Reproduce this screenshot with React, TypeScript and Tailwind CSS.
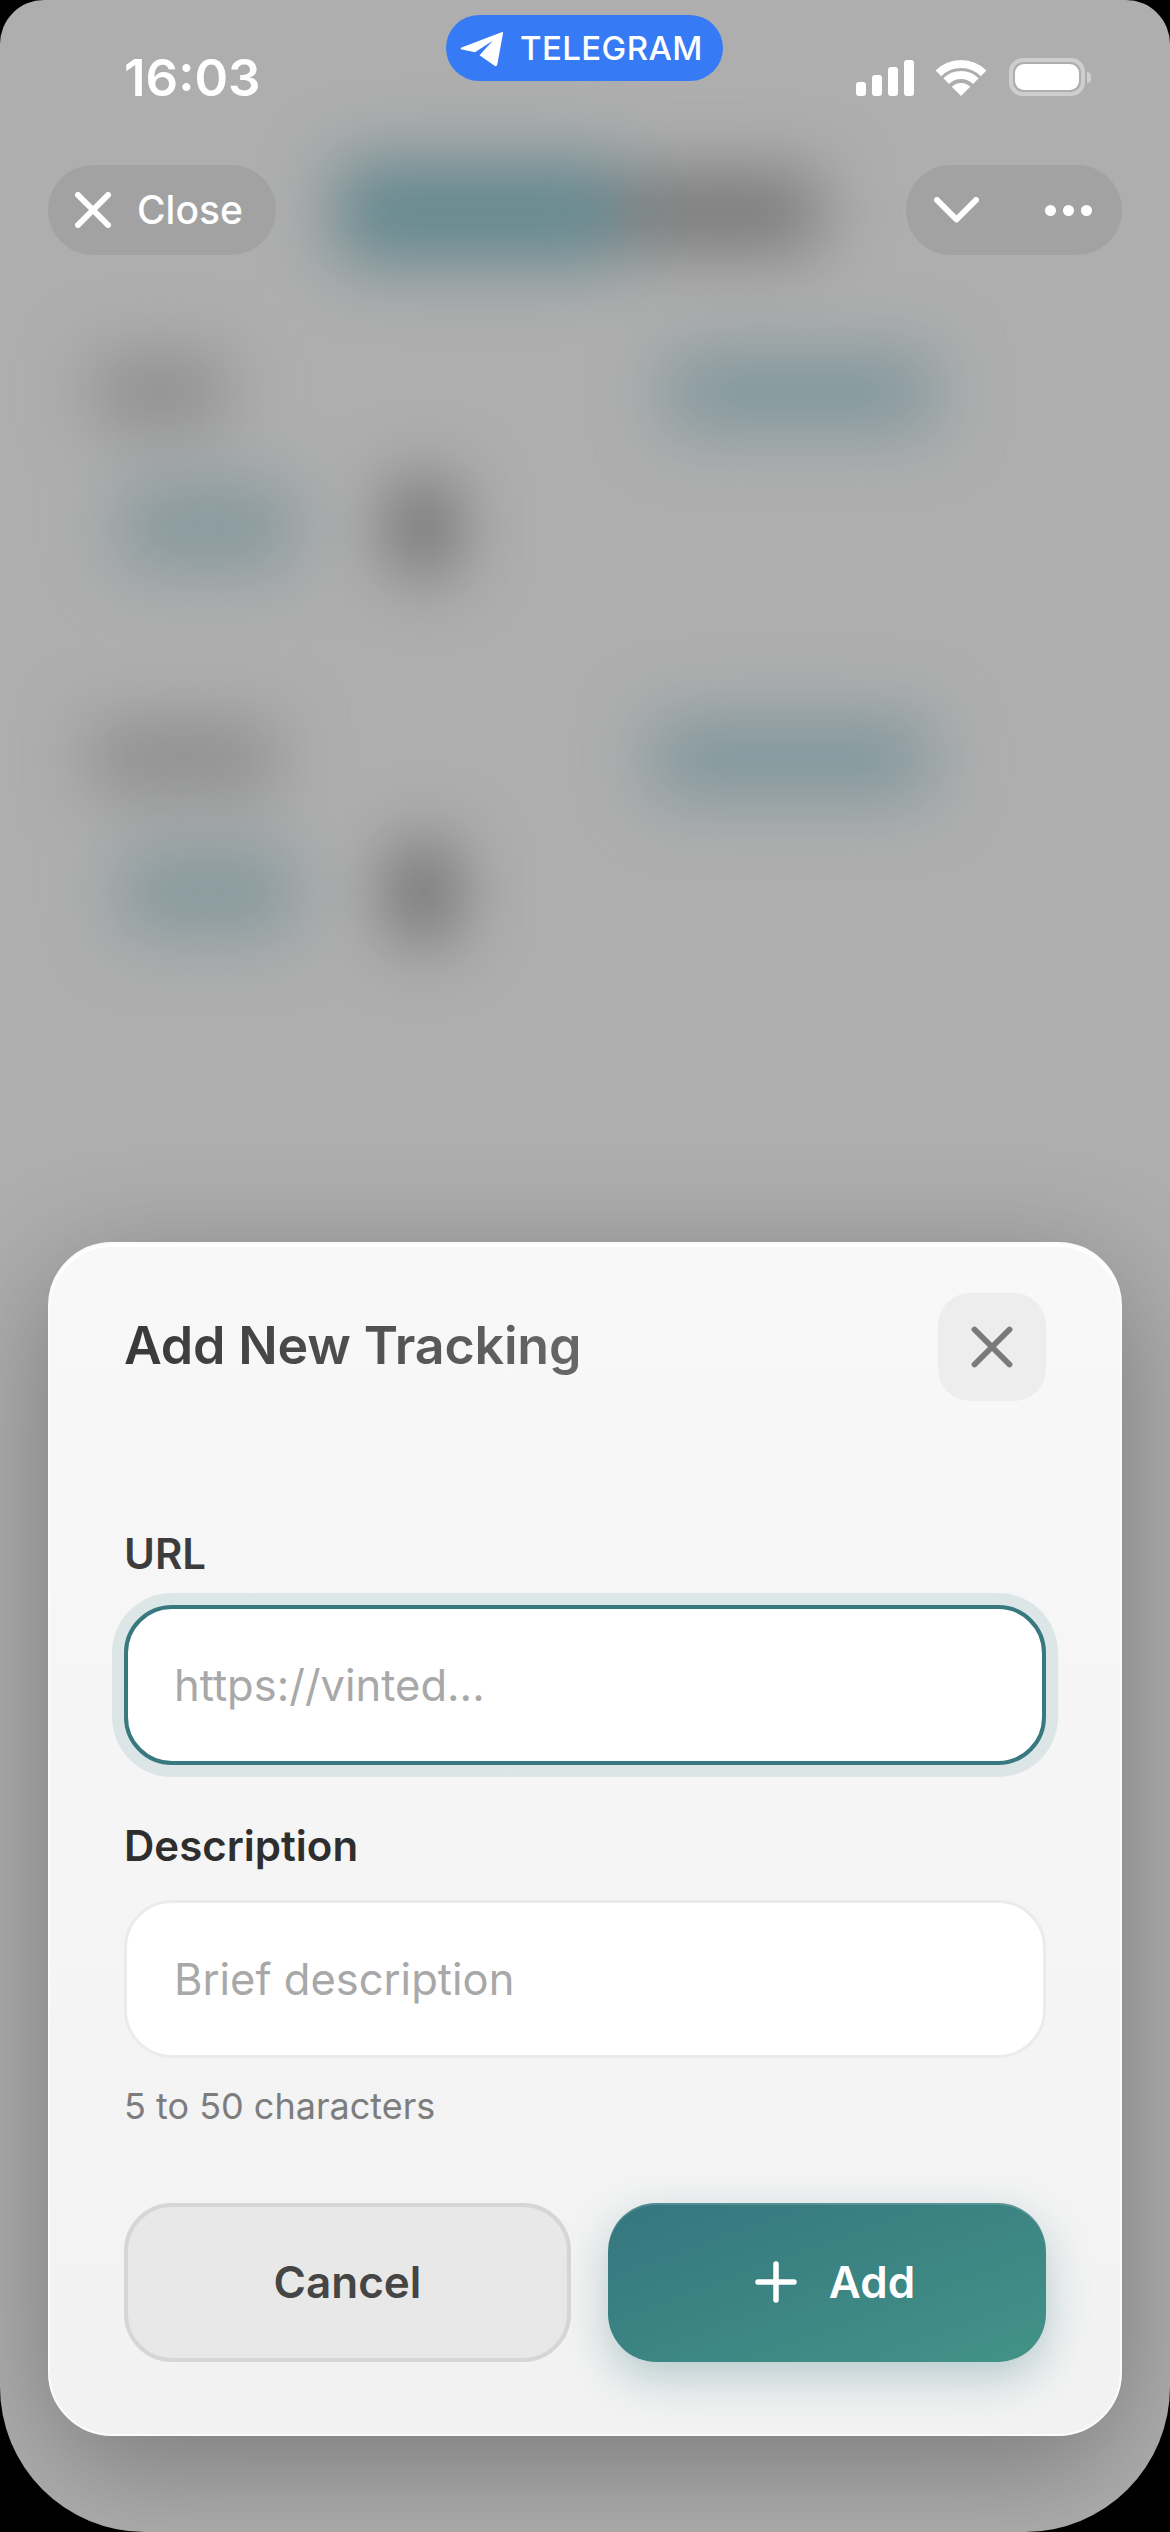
function StatusIcons() {
  return (
    <div className="flex items-end pl-[133px] pt-[43px]">
      <div className="flex items-end gap-[6px]">
        <div className="w-[10px] h-[14px] rounded-[3px] bg-white" />
        <div className="w-[10px] h-[21px] rounded-[3px] bg-white" />
        <div className="w-[10px] h-[29px] rounded-[3px] bg-white" />
        <div className="w-[10px] h-[36px] rounded-[3px] bg-white" />
      </div>
      <svg width="50" height="37" viewBox="0 0 50 37" fill="none" className="ml-[22px] overflow-visible">
        <path d="M2.4 14.4A32 32 0 0 1 47.6 14.4" stroke="#fff" strokeWidth="8" />
        <path d="M10.2 22.2A21 21 0 0 1 39.8 22.2" stroke="#fff" strokeWidth="8" />
        <path d="M25 37L15.8 27.8A13 13 0 0 1 34.2 27.8Z" fill="#fff" />
      </svg>
      <div className="ml-[23px] flex items-center">
        <div className="w-[76px] h-[38px] rounded-[14px] border-4 border-white/40 p-[2px]">
          <div className="w-full h-full rounded-[9px] bg-white" />
        </div>
        <div className="ml-[2px] w-[4px] h-[11px] rounded-r-full bg-white/40" />
      </div>
    </div>
  );
}

function Cross({ size, color, weight }: { size: number; color: string; weight: number }) {
  return (
    <svg width={size} height={size} viewBox="0 0 36 36" fill="none" className="shrink-0">
      <path d="M3 3L33 33M33 3L3 33" stroke={color} strokeWidth={weight} strokeLinecap="round" />
    </svg>
  );
}

function BlurredPage() {
  return (
    <div className="absolute inset-0 blur-[34px]">
      <div className="flex items-center pl-[335px] pt-[160px]">
        <div className="w-[290px] h-[104px] rounded-[24px] bg-[#64888f]" />
        <div className="w-[195px] h-[76px] rounded-[16px] bg-[#777777]" />
      </div>
      <section className="mt-[93px] pl-[95px] pr-[235px]">
        <div className="flex items-center justify-between h-[70px]">
          <div className="w-[130px] h-[70px] bg-[#8c8c8c]" />
          <div className="w-[270px] h-[76px] rounded-[20px] bg-[#7e969c]" />
        </div>
        <div className="mt-[50px] flex items-center pl-[25px]">
          <div className="w-[175px] h-[84px] rounded-[20px] bg-[#84989c]" />
          <div className="ml-[95px] w-[66px] h-[100px] rounded-full bg-[#6a6a6a]" />
        </div>
      </section>
      <section className="mt-[146px] pl-[90px] pr-[240px]">
        <div className="flex items-center justify-between h-[70px]">
          <div className="w-[185px] h-[70px] bg-[#8c8c8c]" />
          <div className="w-[280px] h-[78px] rounded-[20px] bg-[#7e969c]" />
        </div>
        <div className="mt-[47px] flex items-center pl-[30px]">
          <div className="w-[175px] h-[84px] rounded-[20px] bg-[#84989c]" />
          <div className="ml-[95px] w-[66px] h-[104px] rounded-full bg-[#6a6a6a]" />
        </div>
      </section>
    </div>
  );
}

export default function App() {
  return (
    <div className="w-[1170px] h-[2532px] bg-black font-['Inter',sans-serif]">
      <div className="relative w-full h-full overflow-hidden bg-[#aeaeae] rounded-t-[44px] rounded-b-[145px] flex flex-col">
        <BlurredPage />

        <div className="relative h-[165px] pt-[15px] flex items-start">
          <div className="w-[446px] pl-[124px] pt-[33px] text-[51px] leading-[60px] font-semibold text-white">16:03</div>
          <div className="w-[277px] h-[66px] rounded-full bg-[#367af6] flex items-center pl-[4px]">
            <svg width="70" height="56" viewBox="0 0 70 56">
              <path
                d="M51.5 12.2C52.6 11.8 53.2 12.4 53 13.5L47.3 44.6C47 46.2 45.8 46.6 44.6 45.8L29.5 35.3L42.7 20.7L25 32.3L12 29.5C10.2 29 10.2 28 11.6 27.4Z"
                fill="#fff"
              />
            </svg>
            <span className="text-[33px] leading-none font-medium tracking-[0.4px] text-white">TELEGRAM</span>
          </div>
          <StatusIcons />
        </div>

        <div className="relative flex justify-between px-[48px]">
          <div className="w-[228px] h-[90px] rounded-full bg-[#a2a2a2] flex items-center pl-[27px]">
            <Cross size={36} color="#fff" weight={6} />
            <span className="ml-[26px] text-[39px] font-medium text-white">Close</span>
          </div>
          <div className="w-[216px] h-[90px] rounded-full bg-[#a2a2a2] flex items-center justify-between pl-[28px] pr-[30px]">
            <svg width="45" height="26" viewBox="0 0 45 26" fill="none">
              <path d="M3 3L22.5 22.5L42 3" stroke="#fff" strokeWidth="6" strokeLinecap="round" strokeLinejoin="round" />
            </svg>
            <div className="flex gap-[7px]">
              <div className="w-[11px] h-[11px] rounded-full bg-white" />
              <div className="w-[11px] h-[11px] rounded-full bg-white" />
              <div className="w-[11px] h-[11px] rounded-full bg-white" />
            </div>
          </div>
        </div>

        <div className="relative mt-auto mb-[96px] mx-[48px] px-[74px] pt-[49px] pb-[72px] rounded-[64px] border-2 border-[#fbfbfb] bg-linear-to-b from-[#f8f8f8] to-[#f2f2f2] shadow-[inset_0_3px_0_#fff,0_30px_120px_rgba(0,0,0,0.3)]">
          <div className="flex justify-between h-[108px]">
            <h2 className="mt-[18px] h-[70px] text-[52px] leading-[70px] font-semibold tracking-[-0.2px] bg-linear-to-r from-[#383838] to-[#686868] bg-clip-text text-transparent">
              Add New Tracking
            </h2>
            <button className="w-[108px] h-[108px] rounded-[32px] bg-[#ededed] flex items-center justify-center">
              <Cross size={42} color="#7a7a7a" weight={5} />
            </button>
          </div>

          <label className="block mt-[129px] text-[42px] leading-[48px] font-semibold text-[#3c3c3c]">URL</label>
          <input
            placeholder="https://vinted..."
            className="block mt-[27px] w-full h-[160px] pl-[46px] rounded-[48px] border-4 border-[#37797f] bg-white text-[43.5px] placeholder:text-[#a8a8a8] shadow-[0_0_0_12px_rgba(55,121,127,0.13)] outline-none"
          />

          <label className="block mt-[57px] text-[42px] leading-[48px] font-semibold text-[#2e2e2e]">Description</label>
          <input
            placeholder="Brief description"
            className="block mt-[30px] w-full h-[158px] pl-[47px] rounded-[48px] border-[3px] border-[#ebebeb] bg-white text-[43.5px] placeholder:text-[#a8a8a8] outline-none"
          />
          <p className="mt-[26px] text-[36px] leading-[44px] text-[#7d7d7d]">5 to 50 characters</p>

          <div className="mt-[75px] flex gap-[37px]">
            <button className="w-[447px] h-[159px] pb-[2px] rounded-[48px] border-4 border-[#d6d6d6] bg-[#e8e8e8] text-[44px] font-semibold text-[#454545]">
              Cancel
            </button>
            <button className="flex-1 h-[159px] pl-[16px] pb-[2px] rounded-[48px] bg-linear-to-br from-[#35767f] to-[#439387] shadow-[inset_0_2px_0_rgba(255,255,255,0.15),0_16px_44px_rgba(55,120,127,0.32)] flex items-center justify-center text-[44px] font-semibold text-white">
              <svg width="42" height="42" viewBox="0 0 42 42" fill="none">
                <path d="M21 3V39M3 21H39" stroke="#fff" strokeWidth="5.5" strokeLinecap="round" />
              </svg>
              <span className="ml-[32px]">Add</span>
            </button>
          </div>
        </div>
      </div>
    </div>
  );
}
